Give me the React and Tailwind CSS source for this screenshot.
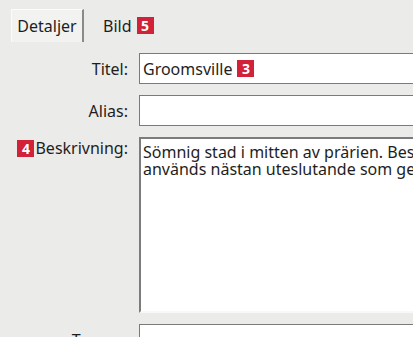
import React from "react";

const Badge = ({ n }) => (
  <span className="inline-flex items-center justify-center w-[17px] h-[17px] bg-[#d1223a] text-white font-bold text-[14px] leading-none">
    {n}
  </span>
);

const App = () => {
  return (
    <div className="w-[413px] h-[337px] overflow-hidden bg-[#ebebea] text-[#1e1e1e] text-[16px] font-['Noto_Sans',sans-serif]">
      {/* tabs */}
      <div className="flex items-end pl-[11px] pt-[9px] h-[42px]">
        <div className="h-[33px] w-[73px] flex items-center justify-center bg-[#f2f2f1] border-t border-l border-[#fbfbfb] border-r-2 border-r-[#8a8a8a]">
          Detaljer
        </div>
        <div className="h-[33px] flex items-center gap-[5px] pl-[19px]">
          <span>Bild</span>
          <Badge n="5" />
        </div>
      </div>

      {/* form */}
      <div className="grid grid-cols-[139px_274px] gap-y-[11px] pt-[11px]">
        <div className="flex items-center justify-end pr-[11px] h-[31px]">Titel:</div>
        <div className="h-[31px] bg-white border border-r-0 border-[#7a7a7a] flex items-center gap-[5px] pl-[3px]">
          <span>Groomsville</span>
          <Badge n="3" />
        </div>

        <div className="flex items-center justify-end pr-[11px] h-[31px]">Alias:</div>
        <div className="h-[31px] bg-white border border-r-0 border-[#7a7a7a]" />

        <div className="flex items-start justify-end pr-[11px] pt-[3px] gap-[1px]">
          <Badge n="4" />
          <span className="leading-[17px]">Beskrivning:</span>
        </div>
        <div className="h-[176px] overflow-hidden bg-white border-t-2 border-l-2 border-t-[#7c7c7c] border-l-[#7c7c7c] border-b-2 border-b-[#f8f8f8] pl-[2px] pt-[5px] leading-[17px] whitespace-nowrap">
          <div>Sömnig stad i mitten av prärien. Best</div>
          <div>används nästan uteslutande som gen</div>
        </div>

        <div className="flex items-start justify-end pr-[11px] pt-[6px] h-[14px] leading-[20px] overflow-hidden">Taggar:</div>
        <div className="h-[14px] bg-white border border-b-0 border-r-0 border-[#7a7a7a]" />
      </div>
    </div>
  );
};

export default App;
